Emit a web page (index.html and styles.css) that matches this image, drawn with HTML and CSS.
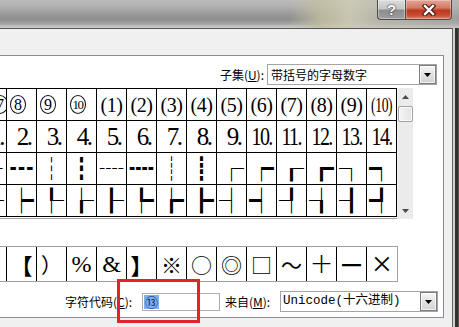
FILE: index.html
```html
<!DOCTYPE html>
<html lang="zh-CN">
<head>
<meta charset="utf-8">
<title>符号</title>
<link rel="stylesheet" href="styles.css">
</head>
<body>
<div class="titlebar">
  <div class="cap help">?</div>
  <div class="cap close"><svg width="14" height="12" viewBox="0 0 14 12"><path d="M3 2L11 10M11 2L3 10" stroke="#4a1c12" stroke-width="4.6" stroke-linecap="square"/><path d="M3 2L11 10M11 2L3 10" stroke="#fff" stroke-width="2.4" stroke-linecap="square"/></svg></div>
</div>
<div class="frame">
  <div class="dialog">
    <div class="tabpage">
      <div class="subset-row">
        <span class="lbl">子集(<u>U</u>):</span>
        <div class="combo combo-subset"><span class="combo-text">带括号的字母数字</span><span class="dd"><svg width="7" height="4" viewBox="0 0 7 4"><path d="M0 0H7L3.5 4Z" fill="#000"/></svg></span></div>
      </div>
      <div class="grid-area">
        <div class="grid-wrap">
          <div class="grid">
            <div class="part"><span class="c">7</span></div>
            <div><span class="c">8</span></div>
            <div><span class="c">9</span></div>
            <div><span class="c t">10</span></div>
            <div><span class="pn">(1)</span></div>
            <div><span class="pn">(2)</span></div>
            <div><span class="pn">(3)</span></div>
            <div><span class="pn">(4)</span></div>
            <div><span class="pn">(5)</span></div>
            <div><span class="pn">(6)</span></div>
            <div><span class="pn">(7)</span></div>
            <div><span class="pn">(8)</span></div>
            <div><span class="pn">(9)</span></div>
            <div><span class="pn w">(10)</span></div>

            <div class="part"><span class="n">1.</span></div>
            <div><span class="n">2.</span></div>
            <div><span class="n">3.</span></div>
            <div><span class="n">4.</span></div>
            <div><span class="n">5.</span></div>
            <div><span class="n">6.</span></div>
            <div><span class="n">7.</span></div>
            <div><span class="n">8.</span></div>
            <div><span class="n">9.</span></div>
            <div><span class="n w">10.</span></div>
            <div><span class="n w">11.</span></div>
            <div><span class="n w">12.</span></div>
            <div><span class="n w">13.</span></div>
            <div><span class="n w">14.</span></div>

            <div><span class="b">┄</span></div>
            <div><span class="b">┅</span></div>
            <div><span class="b">┆</span></div>
            <div><span class="b">┇</span></div>
            <div><span class="b">┈</span></div>
            <div><span class="b">┉</span></div>
            <div><span class="b">┊</span></div>
            <div><span class="b">┋</span></div>
            <div><span class="b">┌</span></div>
            <div><span class="b">┍</span></div>
            <div><span class="b">┎</span></div>
            <div><span class="b">┏</span></div>
            <div><span class="b">┐</span></div>
            <div><span class="b">┑</span></div>

            <div><span class="b">├</span></div>
            <div><span class="b">┝</span></div>
            <div><span class="b">┞</span></div>
            <div><span class="b">┟</span></div>
            <div><span class="b">┠</span></div>
            <div><span class="b">┡</span></div>
            <div><span class="b">┢</span></div>
            <div><span class="b">┣</span></div>
            <div><span class="b">┤</span></div>
            <div><span class="b">┥</span></div>
            <div><span class="b">┦</span></div>
            <div><span class="b">┧</span></div>
            <div><span class="b">┨</span></div>
            <div><span class="b">┩</span></div>
          </div>
        </div>
        <div class="vscroll">
          <span class="sbtn"><svg width="7" height="4" viewBox="0 0 7 4"><path d="M3.5 0L7 4H0Z" fill="#4a4a4a"/></svg></span>
          <span class="thumb"></span>
          <span class="strack"></span>
          <span class="sbtn"><svg width="7" height="4" viewBox="0 0 7 4"><path d="M0 0H7L3.5 4Z" fill="#4a4a4a"/></svg></span>
        </div>
      </div>
      <div class="recent">
        <span></span>
        <span class="brk">【</span>
        <span>）</span>
        <span class="ser">%</span>
        <span class="ser">&amp;</span>
        <span class="brk">】</span>
        <span>※</span>
        <span>○</span>
        <span>◎</span>
        <span>□</span>
        <span class="wave">～</span>
        <span class="plus">+</span>
        <span class="dash">━</span>
        <span class="times">×</span>
      </div>
      <div class="code-row">
        <span class="lbl lbl-code">字符代码(<u>C</u>):</span>
        <div class="input"><span class="sel">⑬</span></div>
        <span class="lbl lbl-from">来自(<u>M</u>):</span>
        <div class="combo combo-from"><span class="combo-text mono">Unicode(十六进制)</span><span class="dd"><svg width="7" height="4" viewBox="0 0 7 4"><path d="M0 0H7L3.5 4Z" fill="#000"/></svg></span></div>
      </div>
    </div>
  </div>
  <div class="rframe"></div>
</div>
<div class="annot"></div>
</body>
</html>
```
FILE: styles.css
```css
* { box-sizing: border-box; margin: 0; padding: 0; }
html, body { width: 459px; height: 327px; overflow: hidden; }
body {
  position: relative;
  font-family: "Noto Sans CJK SC", sans-serif;
  font-size: 12px;
  color: #000;
  background: #f0f0f0;
}

/* title bar */
.titlebar {
  height: 28px;
  display: flex;
  justify-content: flex-end;
  align-items: flex-start;
  padding-right: 7px;
  background:
    linear-gradient(to right, rgba(190,186,160,0) 0, rgba(190,186,160,0) 290px, rgba(196,192,160,.8) 320px, rgba(205,202,180,.9) 350px, rgba(196,194,180,.7) 380px, rgba(180,180,175,.4) 459px),
    linear-gradient(to bottom, #bababa 0, #b2b2b2 6px, #9c9c9c 13px, #8e8e8e 19px, #a4a4a4 24px, #cacaca 27px);
}
.cap { height: 20px; display: flex; align-items: center; justify-content: center; }
.help {
  width: 28px;
  border: 1px solid #4c4c4c;
  border-top: 0;
  border-right: 0;
  border-bottom-left-radius: 4px;
  background: linear-gradient(#dcdcdc, #c6c6c6 45%, #8e8e8e 55%, #9e9e9e);
  box-shadow: inset 0 0 0 1px rgba(255,255,255,.35);
  font: bold 15px/1 "Liberation Sans", sans-serif;
  color: #fff;
  text-shadow: 0 0 1px #222, 0 0 2px #333;
}
.close {
  width: 47px;
  border: 1px solid #4c4c4c;
  border-top: 0;
  border-bottom-right-radius: 4px;
  background: linear-gradient(#e4a496, #d47c68 40%, #c0381e 55%, #c84c32 80%, #dc8268);
  box-shadow: inset 0 0 0 1px rgba(255,255,255,.3);
}

/* frame */
.frame { display: flex; height: 299px; }
.dialog {
  width: 453px;
  border-top: 1px solid #555;
  border-right: 1px solid #666;
  padding-top: 26px;
  background: #f0f0f0;
}
.rframe {
  flex: 1;
  background: linear-gradient(to right, #d2d2d2 0 2px, #34302b 2px 5px, #58534d 5px);
}

.tabpage {
  margin-left: -2px;
  width: 446px;
  height: 263px;
  border: 1px solid #898c95;
  background: #fff;
}

.lbl { white-space: nowrap; line-height: 1; }

/* subset row */
.subset-row {
  display: flex;
  justify-content: flex-end;
  align-items: center;
  height: 21px;
  margin-top: 8px;
  padding-right: 6px;
}
.subset-row .lbl { margin-right: 3px; }
.combo {
  display: flex;
  align-items: center;
  height: 21px;
  border: 1px solid #a5a5a5;
  background: #fff;
  padding-left: 3px;
}
.combo-subset { width: 170px; }
.combo-text { flex: 1; white-space: nowrap; line-height: 1; }
.dd {
  width: 17px;
  height: 19px;
  display: flex;
  align-items: center;
  justify-content: center;
  border: 1px solid #7c7c7c;
  background: linear-gradient(#f6f6f6, #e2e2e2 50%, #d2d2d2);
  box-shadow: inset 0 0 0 1px rgba(255,255,255,.7);
}

/* symbol grid */
.grid-area { display: flex; margin-top: 3px; margin-left: -23px; }
.grid-wrap { border-bottom: 1px solid #a0a0a0; padding-bottom: 1px; }
.grid {
  display: grid;
  grid-template-columns: repeat(14, 30px);
  grid-auto-rows: 32px;
  border-top: 1px solid #000;
  border-left: 1px solid #000;
  background: #fff;
}
.grid > div {
  display: flex;
  align-items: center;
  justify-content: center;
  border-right: 1px solid #000;
  border-bottom: 1px solid #000;
  overflow: hidden;
}
.grid > .part { justify-content: flex-end; }
.c {
  width: 16px;
  height: 19px;
  flex: none;
  display: flex;
  align-items: center;
  justify-content: center;
  border: 1px solid #111;
  border-radius: 50%;
  font: 16px/1 "Liberation Serif", serif;
  margin-right: 7px;
}
.part .c { margin-right: -2px; }
.c.t { font-size: 13px; letter-spacing: -1.5px; text-indent: -1px; }
.pn { font: 20px/1 "Liberation Serif", serif; letter-spacing: -.5px; }
.pn.w { transform: scaleX(.68); }
.n { font: 25px/1 "Liberation Serif", serif; letter-spacing: -2.5px; margin-left: 4px; }
.n.w { letter-spacing: -2px; transform: scaleX(.8); margin-left: 0; flex: none; }
.part .n { margin-left: 0; margin-right: 3px; }
.b { font: 25px/25px "Noto Sans CJK SC", sans-serif; margin-top: -2px; }

/* scrollbar */
.vscroll {
  width: 16px;
  height: 131px;
  display: flex;
  flex-direction: column;
  align-items: center;
  background: #ebebeb;
  border-left: 1px solid #f3f3f3;
}
.sbtn { height: 17px; width: 100%; display: flex; align-items: center; justify-content: center; }
.thumb {
  width: 15px;
  height: 16px;
  margin-top: 1px;
  border: 1px solid #a2a2a2;
  border-radius: 2px;
  background: linear-gradient(to right, #f4f4f4, #e4e4e4);
  box-shadow: inset 0 0 0 1px #fbfbfb;
}
.strack { flex: 1; }

/* recently used */
.recent {
  display: flex;
  width: 422px;
  height: 36px;
  margin: 27px 0 0 -23px;
  border: 1px solid #a0a0a0;
  background: #fff;
}
.recent > span {
  width: 30px;
  flex: none;
  display: flex;
  align-items: center;
  justify-content: center;
  border-right: 1px solid #000;
  font: 21px/1 "Noto Sans CJK SC", sans-serif;
}
.recent > span:last-child { border-right: 0; }
.recent > .brk { font-weight: bold; font-size: 22px; }
.recent > .ser { font: 24px/1 "Liberation Serif", serif; }
.recent > .wave { font-size: 21px; }
.recent > .plus { font: 300 28px/1 "DejaVu Sans", sans-serif; }
.recent > .dash { font-size: 19px; }
.recent > .times { font: 36px/1 "Liberation Serif", serif; }

/* code row */
.code-row {
  display: flex;
  align-items: center;
  height: 21px;
  margin-top: 9px;
  padding-left: 66px;
}
.lbl-code { width: 71px; }
.input {
  width: 78px;
  height: 18px;
  margin-left: 6px;
  border: 1px solid #abadb3;
  background: #fff;
  display: flex;
  align-items: center;
  padding-left: 1px;
}
.sel {
  background: #7cb0ec;
  color: #0a2660;
  font-size: 13px;
  line-height: 14px;
  padding: 0 1px;
}
.lbl-from { width: 50px; margin-left: 5px; }
.combo-from { width: 158px; margin-left: 5px; padding-left: 2px; }
.mono { font-family: "Liberation Mono", "Noto Sans CJK SC", monospace; font-size: 12.5px; }

/* annotation box */
.annot {
  position: absolute;
  left: 117px;
  top: 279px;
  width: 83px;
  height: 44px;
  border: 3px solid #e2232a;
}
```
